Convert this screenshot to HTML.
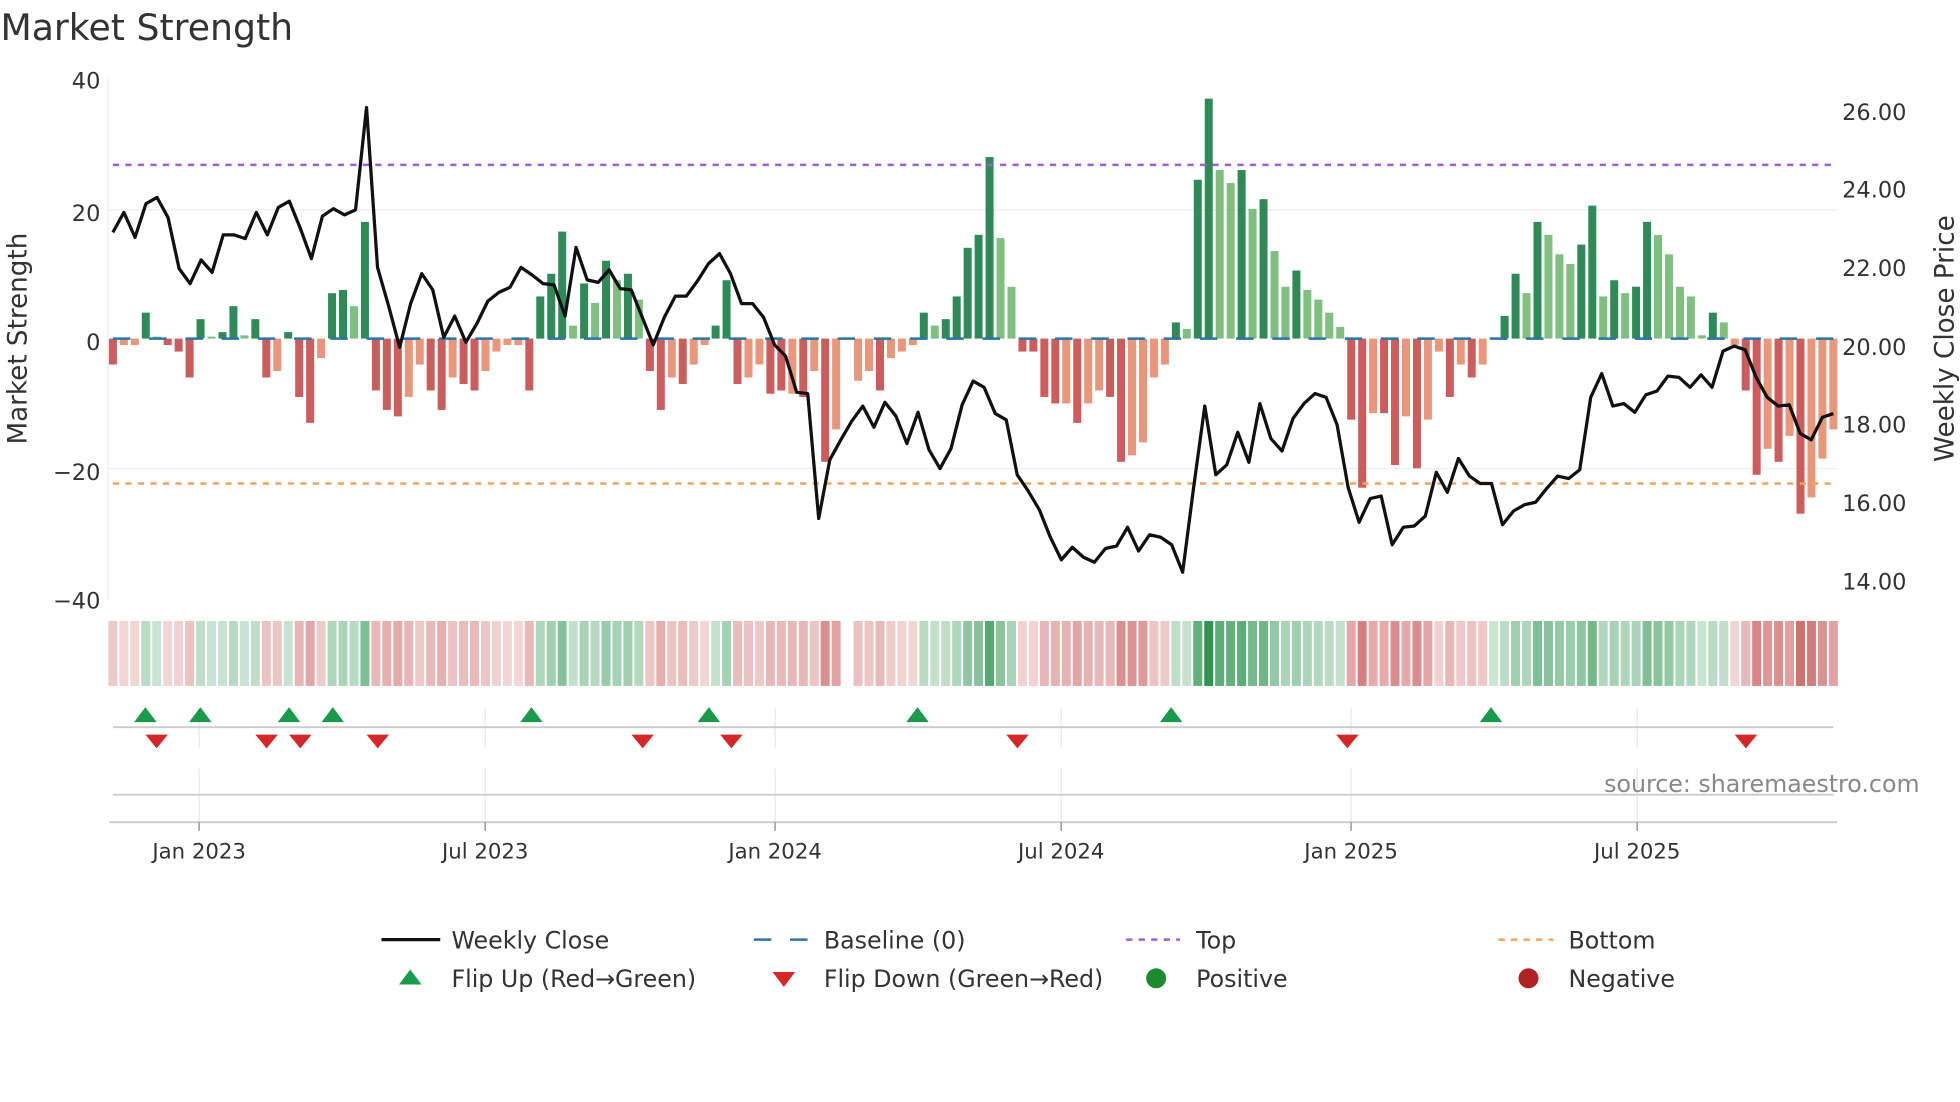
<!DOCTYPE html>
<html><head><meta charset="utf-8"><style>
html,body{margin:0;padding:0;background:#fff;}
svg{display:block;font-family:"DejaVu Sans","Liberation Sans",sans-serif;}
</style></head><body>
<svg id="s" width="1960" height="1102" viewBox="0 0 1568 882" xmlns="http://www.w3.org/2000/svg">
<rect width="1568" height="882" fill="#fff"/>
<text x="0" y="32" font-size="29" fill="#333">Market Strength</text>
<g stroke="#eceff3" stroke-width="1">
<line x1="86" y1="168" x2="1470" y2="168"/><line x1="86" y1="375" x2="1470" y2="375"/>
</g>
<line x1="86" y1="62" x2="86" y2="480" stroke="#eeeeee" stroke-width="1"/>
<g id="bars"></g>
<line x1="90" y1="271" x2="1468" y2="271" stroke="#2a75a8" stroke-width="2" stroke-dasharray="14,15"/>
<line x1="90" y1="132" x2="1468" y2="132" stroke="#9b5fe0" stroke-width="2" stroke-dasharray="5,5"/>
<line x1="90" y1="387" x2="1468" y2="387" stroke="#f4a35c" stroke-width="2" stroke-dasharray="5,5"/>
<polyline id="price" fill="none" stroke="#111" stroke-width="2.6" stroke-linejoin="round"/>
<g font-size="18" fill="#333" text-anchor="end">
<text x="80" y="71">40</text><text x="80" y="177">20</text><text x="80" y="280">0</text><text x="80" y="384">−20</text><text x="80" y="487">−40</text>
</g>
<g font-size="18" fill="#333">
<text x="1474" y="96">26.00</text><text x="1474" y="158">24.00</text><text x="1474" y="221">22.00</text><text x="1474" y="284">20.00</text><text x="1474" y="346">18.00</text><text x="1474" y="409">16.00</text><text x="1474" y="472">14.00</text>
</g>
<text transform="translate(21,271) rotate(-90)" font-size="21" fill="#333" text-anchor="middle">Market Strength</text>
<text transform="translate(1563,271) rotate(-90)" font-size="21" fill="#333" text-anchor="middle">Weekly Close Price</text>
<g id="strip"></g>
<g stroke="#e6e8ec" stroke-width="1">
<line x1="159" y1="567" x2="159" y2="598"/><line x1="388" y1="567" x2="388" y2="598"/><line x1="620" y1="567" x2="620" y2="598"/><line x1="849" y1="567" x2="849" y2="598"/><line x1="1081" y1="567" x2="1081" y2="598"/><line x1="1310" y1="567" x2="1310" y2="598"/>
<line x1="159" y1="615" x2="159" y2="658"/><line x1="388" y1="615" x2="388" y2="658"/><line x1="620" y1="615" x2="620" y2="658"/><line x1="849" y1="615" x2="849" y2="658"/><line x1="1081" y1="615" x2="1081" y2="658"/><line x1="1310" y1="615" x2="1310" y2="658"/>
</g>
<line x1="90" y1="582" x2="1467" y2="582" stroke="#ccc" stroke-width="1.5"/>
<line x1="90" y1="636" x2="1467" y2="636" stroke="#ccc" stroke-width="1.5"/>
<line x1="87" y1="658" x2="1470" y2="658" stroke="#ccc" stroke-width="1.5"/>
<g stroke="#999" stroke-width="1.2">
<line x1="159" y1="658" x2="159" y2="665"/><line x1="388" y1="658" x2="388" y2="665"/><line x1="620" y1="658" x2="620" y2="665"/><line x1="849" y1="658" x2="849" y2="665"/><line x1="1081" y1="658" x2="1081" y2="665"/><line x1="1310" y1="658" x2="1310" y2="665"/>
</g>
<g id="flips"></g>
<g font-size="17" fill="#333" text-anchor="middle">
<text x="159" y="687">Jan 2023</text><text x="388" y="687">Jul 2023</text><text x="620" y="687">Jan 2024</text><text x="849" y="687">Jul 2024</text><text x="1081" y="687">Jan 2025</text><text x="1310" y="687">Jul 2025</text>
</g>
<text x="1536" y="634" font-size="19" fill="#888" text-anchor="end">source: sharemaestro.com</text>
<g font-size="19" fill="#333">
<line x1="305" y1="752" x2="352" y2="752" stroke="#111" stroke-width="2.6"/>
<text x="361" y="759">Weekly Close</text>
<line x1="603" y1="752" x2="646" y2="752" stroke="#2a75a8" stroke-width="2" stroke-dasharray="14,15"/>
<text x="659" y="759">Baseline (0)</text>
<line x1="901" y1="752" x2="944" y2="752" stroke="#9b5fe0" stroke-width="2" stroke-dasharray="5,5"/>
<text x="957" y="759">Top</text>
<line x1="1199" y1="752" x2="1243" y2="752" stroke="#f4a35c" stroke-width="2" stroke-dasharray="5,5"/>
<text x="1255" y="759">Bottom</text>
<polygon points="319,788 337,788 328,776" fill="#1a9a4a"/>
<text x="361" y="790">Flip Up (Red→Green)</text>
<polygon points="618,778 636,778 627,790" fill="#d62728"/>
<text x="659" y="790">Flip Down (Green→Red)</text>
<circle cx="925" cy="783" r="8" fill="#1e8a2e"/>
<text x="957" y="790">Positive</text>
<circle cx="1223" cy="783" r="8" fill="#b22222"/>
<text x="1255" y="790">Negative</text>
</g>
</svg>
<script>
var NS="http://www.w3.org/2000/svg";
var V=[[-4,1],[-1,0],[-1,0],[4,1],[0.3,0],[-1,1],[-2,1],[-6,1],[3,1],[0.3,0],[1,1],[5,1],[0.5,0],[3,1],[-6,1],[-5,0],[1,1],[-9,1],[-13,1],[-3,0],[7,1],[7.5,1],[5,0],[18,1],[-8,1],[-11,1],[-12,1],[-9,0],[-4,0],[-8,1],[-11,1],[-6,0],[-7,1],[-8,1],[-5,0],[-2,0],[-1,0],[-1,0],[-8,1],[6.5,1],[10,1],[16.5,1],[2,0],[8.5,1],[5.5,0],[12,1],[9,0],[10,1],[6,0],[-5,1],[-11,1],[-6,0],[-7,1],[-4,0],[-1,0],[2,1],[9,1],[-7,1],[-6,0],[-4,0],[-8.5,1],[-8,1],[-8.5,0],[-9,1],[-5,0],[-19,1],[-14,0],[0,2],[-6.5,0],[-5,0],[-8,1],[-3,0],[-2,0],[-1,0],[4,1],[2,0],[3,1],[6.5,1],[14,1],[16,1],[28,1],[15.5,0],[8,0],[-2,1],[-2,1],[-9,1],[-10,1],[-10,0],[-13,1],[-10,0],[-8,0],[-9,1],[-19,1],[-18,0],[-16,0],[-6,0],[-4,0],[2.5,1],[1.5,0],[24.5,1],[37,1],[26,0],[24,0],[26,1],[20,0],[21.5,1],[13.5,0],[8,0],[10.5,1],[7.5,0],[6,0],[4,0],[1.8,0],[-12.5,1],[-23,1],[-11.5,0],[-11.5,1],[-19.5,1],[-12,0],[-20,1],[-12.5,0],[-2,0],[-9,1],[-4,0],[-6,1],[-4,0],[0.2,0],[3.5,1],[10,1],[7,0],[18,1],[16,0],[13,0],[11.5,0],[14.5,1],[20.5,1],[6.5,0],[9,1],[7,0],[8,1],[18,1],[16,0],[13,0],[8,0],[6.5,0],[0.5,0],[4,1],[2.5,0],[-1,0],[-8,1],[-21,1],[-17,0],[-19,1],[-15,0],[-27,1],[-24.5,0],[-18.5,0],[-14,0]];
var n=V.length, x0=90, x1=1467, st=(x1-x0)/(n-1);
var bars=document.getElementById('bars'), strip=document.getElementById('strip');
function el(t,a,p){var e=document.createElementNS(NS,t);for(var k in a)e.setAttribute(k,a[k]);p.appendChild(e);return e;}
for(var i=0;i<n;i++){
 var v=V[i][0],d=V[i][1],x=x0+i*st;
 if(d==2) continue;
 var h=Math.abs(v)*5.19, y=v>=0?271-h:271;
 var c=v>=0?(d?'#2e8b57':'#7fbf7f'):(d?'#cd5c5c':'#e9967a');
 el('rect',{x:x-3.2,y:y,width:6.4,height:Math.max(h,0.5),fill:c},bars);
 var a, sc;
 if(v>=0){a=0.25+0.75*Math.min(v/37,1); sc='rgba(46,150,80,'+a.toFixed(2)+')';}
 else {a=0.22+0.6*Math.min(-v/27,1); sc='rgba(200,80,80,'+a.toFixed(2)+')';}
 el('rect',{x:x-3.6,y:497,width:7.2,height:52,fill:sc},strip);
}
var P=[186,170,190,163,158,174,215,227,208,218,188,188,191,170,188,166,161,183,207,173,167,172,168,86,214,245,278,243,219,232,270,253,274,259,241,234,230,214,220,227,228,253,198,224,226,216,231,232,254,276,254,237,237,225,211,203,219,243,243,254,276,285,314,315,415,368,352,337,325,342,322,333,355,330,360,375,359,324,305,310,331,336,380,393,408,430,448,438,446,450,439,437,422,441,428,430,436,458,390,325,380,372,346,370,323,351,361,335,323,315,318,340,390,418,399,397,436,422,421,413,378,394,367,381,387,387,420,409,404,402,391,381,383,376,318,299,325,323,330,316,313,301,302,310,300,310,281,277,280,302,318,325,324,347,352,334,331];
var ps=(x1-x0)/(P.length-1), pts=[];
for(var j=0;j<P.length;j++) pts.push((x0+j*ps).toFixed(1)+','+P[j]);
document.getElementById('price').setAttribute('points',pts.join(' '));
var fl=document.getElementById('flips');
[116,160,231,266,425,567,734,937,1193].forEach(function(x){el('polygon',{points:(x-9)+',578 '+(x+9)+',578 '+x+',566',fill:'#1a9a4a'},fl);});
[125,213,240,302,514,585,814,1078,1397].forEach(function(x){el('polygon',{points:(x-9)+',588 '+(x+9)+',588 '+x+',599',fill:'#d62728'},fl);});
</script>
</body></html>
